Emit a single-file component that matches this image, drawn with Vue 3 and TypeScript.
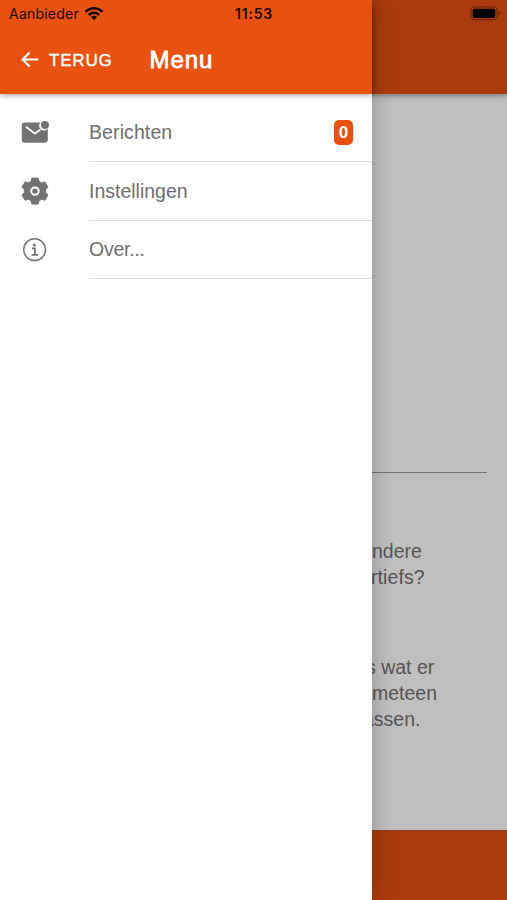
<script setup lang="ts">
type IconName = 'mail' | 'settings' | 'info'

interface MenuItem {
  icon: IconName
  label: string
  badge?: number
}

const items: MenuItem[] = [
  { icon: 'mail', label: 'Berichten', badge: 0 },
  { icon: 'settings', label: 'Instellingen' },
  { icon: 'info', label: 'Over...' },
]
</script>

<template>
  <div class="screen">
    <div class="page">
      <header class="page-header"></header>
      <main class="page-body">
        <hr class="rule" />
        <p class="copy first">
          <span class="l1">ndere</span>
          <span class="l2">rtiefs?</span>
        </p>
        <p class="copy">
          <span class="l3">s wat er</span>
          <span class="l4">meteen</span>
          <span class="l5">assen.</span>
        </p>
      </main>
      <footer class="page-footer"></footer>
    </div>

    <aside class="drawer">
      <header class="drawer-header">
        <button class="back" type="button">
          <svg class="arrow" viewBox="0 0 20 18">
            <path d="M18.4 8.5H2.8M9.6 1.5L2.6 8.5l7 7" fill="none" stroke="#fff" stroke-width="2.1" />
          </svg>
          <span class="back-label">TERUG</span>
        </button>
        <h1>Menu</h1>
      </header>
      <nav>
        <a v-for="item in items" :key="item.icon" class="item">
          <svg v-if="item.icon === 'mail'" class="icon" viewBox="0 0 28 28">
            <path
              d="M4 3.4H19.3A4.9 4.9 0 0 0 26.8 9.8V20.6A3.2 3.2 0 0 1 23.6 23.8H4A3.2 3.2 0 0 1 .8 20.6V6.6A3.2 3.2 0 0 1 4 3.4Z"
            />
            <circle cx="24" cy="6" r="4" />
            <path d="M5 7.8l9 6.8 5.4-4.1" fill="none" stroke="#fff" stroke-width="1.8" />
          </svg>
          <svg v-else-if="item.icon === 'settings'" class="icon" viewBox="0 0 28 28">
            <path
              d="M10.9 1.1H17.1L17.9 4.3L20.7 5.9L23.9 4.9L27 10.2L24.7 12.5V15.7L27 18L23.9 23.3L20.7 22.2L17.9 23.8L17.1 27.1H10.9L10.1 23.8L7.3 22.2L4.1 23.3L1 18L3.3 15.7V12.5L1 10.2L4.1 4.9L7.3 5.9L10.1 4.3Z"
              stroke="#737373"
              stroke-width="1"
              stroke-linejoin="round"
            />
            <circle cx="14" cy="14.1" r="3.7" fill="#737373" stroke="#fff" stroke-width="2" />
          </svg>
          <svg v-else class="icon" viewBox="0 0 28 28">
            <circle cx="13.6" cy="13.7" r="10.9" fill="none" stroke="#737373" stroke-width="1.5" />
            <circle cx="13.4" cy="8.9" r="1.5" />
            <path d="M11 12.3h2.9v6.4M10.5 18.9h6.5" fill="none" stroke="#737373" stroke-width="1.7" />
          </svg>
          <span class="row">
            <span class="label" :class="item.icon">{{ item.label }}</span>
            <span v-if="item.badge !== undefined" class="badge">{{ item.badge }}</span>
          </span>
        </a>
      </nav>
    </aside>

    <div class="status">
      <div class="carrier">
        <span>Aanbieder</span>
        <svg class="wifi" viewBox="0 0 20 14">
          <path d="M1.5 4.7a12.2 12.2 0 0 1 17 0" fill="none" stroke="#1d0900" stroke-width="2.6" />
          <path d="M4.8 8a7.4 7.4 0 0 1 10.4 0" fill="none" stroke="#1d0900" stroke-width="2.5" />
          <path d="M10 13.2L6.9 10.1a4.3 4.3 0 0 1 6.2 0Z" fill="#1d0900" />
        </svg>
      </div>
      <time>11:53</time>
      <svg class="battery" viewBox="0 0 31 15">
        <rect x=".8" y=".8" width="26.4" height="12.9" rx="4" fill="none" stroke="#702807" stroke-width="1.3" />
        <rect x="2.7" y="2.7" width="22.5" height="9.2" rx="2" fill="#000" />
        <path d="M28.7 5v4.6q1.5-.7 1.5-2.3T28.7 5Z" fill="#702807" />
      </svg>
    </div>
  </div>
</template>

<style>
body {
  margin: 0;
}
</style>

<style scoped>
.screen {
  position: relative;
  width: 507px;
  height: 900px;
  overflow: hidden;
  font-family: 'Liberation Sans', Arial, sans-serif;
}
.page {
  display: flex;
  flex-direction: column;
  height: 100%;
  background: #bfbfbf;
}
.page-header {
  height: 94px;
  flex: none;
  background: #ab3b0c;
  box-shadow: 0 1px 6px rgba(0, 0, 0, 0.45);
}
.page-body {
  flex: 1;
  padding: 378px 20px 0;
}
.rule {
  margin: 0;
  border: 0;
  height: 1px;
  background: #707070;
}
.copy {
  display: flex;
  flex-direction: column;
  margin: 0 0 0 351px;
  font-size: 19.5px;
  line-height: 26px;
  white-space: nowrap;
  color: #545454;
}
.copy.first {
  margin-top: 65px;
  margin-bottom: 64px;
}
.l1 {
  margin-left: 1px;
}
.l2 {
  letter-spacing: 0.1px;
}
.l3 {
  margin-left: -5px;
}
.l4 {
  margin-left: 1px;
}
.l5 {
  margin-left: -8px;
}
.page-footer {
  height: 69px;
  flex: none;
  border-top: 1px solid #8c3b1b;
  background: #ab3b0c;
}
.drawer {
  position: absolute;
  inset: 0 auto 0 0;
  width: 372.4px;
  background: #fff;
  box-shadow: 0 0 20px rgba(0, 0, 0, 0.26);
}
.drawer-header {
  display: flex;
  align-items: center;
  box-sizing: border-box;
  height: 94px;
  padding: 26px 0 0 20px;
  background: #e8510f;
  color: #fff;
  box-shadow: 0 1px 6px rgba(0, 0, 0, 0.4);
}
.back {
  display: flex;
  align-items: center;
  width: 129.5px;
  padding: 0;
  border: 0;
  background: none;
  color: inherit;
  font: 17px 'Liberation Sans', Arial, sans-serif;
  letter-spacing: 0.8px;
  -webkit-text-stroke: 0.4px #fff;
}
.back-label {
  padding-top: 1px;
}
.arrow {
  width: 20px;
  height: 18px;
  margin-right: 9px;
}
h1 {
  margin: 0;
  font-size: 24px;
  font-weight: 400;
  letter-spacing: 0.95px;
  -webkit-text-stroke: 0.8px #fff;
}
nav {
  padding-top: 9.4px;
}
.item {
  display: flex;
  align-items: center;
  height: 58.7px;
  padding-left: 21px;
}
.icon {
  width: 28px;
  height: 28px;
  fill: #737373;
}
.row {
  display: flex;
  flex: 1;
  align-items: center;
  justify-content: space-between;
  box-sizing: border-box;
  height: 100%;
  margin-left: 40px;
  padding-right: 19.4px;
  border-bottom: 1.4px solid #dedede;
}
.label {
  padding-top: 2px;
  font-size: 19.5px;
  color: #6e6e6e;
}
.label.mail {
  padding-top: 0.6px;
  letter-spacing: 0.1px;
}
.label.info {
  padding-top: 0;
  letter-spacing: -0.25px;
}
.badge {
  width: 19px;
  height: 25px;
  border-radius: 5px;
  background: #e8510f;
  color: #fff;
  font: 700 17px/25px 'Liberation Sans', Arial, sans-serif;
  text-align: center;
}
.status {
  position: absolute;
  inset: 0 0 auto;
  display: grid;
  grid-template-columns: 1fr auto 1fr;
  align-items: center;
  height: 27px;
  padding: 0 6px 0 9px;
  font-family: Inter, sans-serif;
  font-size: 14px;
  color: #1d0900;
}
.carrier {
  display: flex;
  align-items: center;
  gap: 5px;
  letter-spacing: 0.22px;
}
.wifi {
  width: 20px;
  height: 14px;
}
time {
  margin-right: 2px;
  font-weight: 600;
  letter-spacing: 0.75px;
}
.battery {
  justify-self: end;
  width: 31px;
  height: 15px;
}
</style>
